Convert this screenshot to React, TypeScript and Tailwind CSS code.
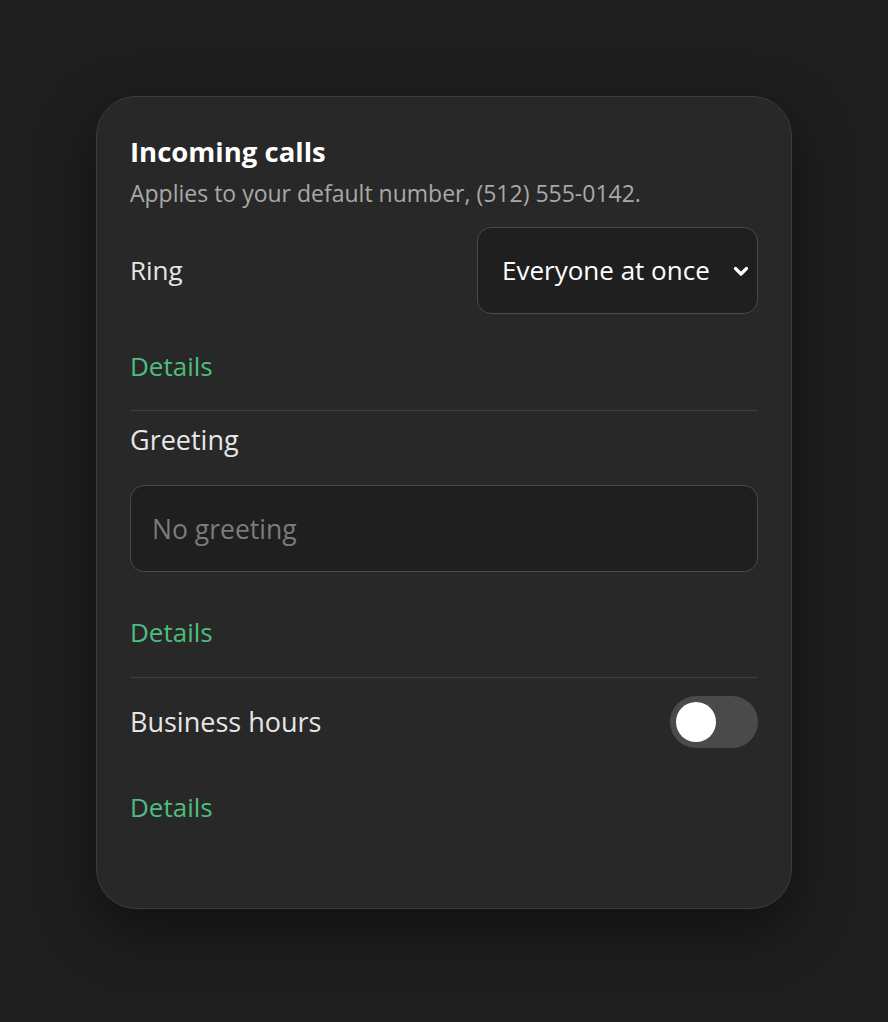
import React, { useState } from 'react';

const font = { fontFamily: '"Open Sans", "Liberation Sans", sans-serif' };

export default function App() {
  const [ring, setRing] = useState('all');
  const [hours, setHours] = useState(false);

  return (
    <div className="min-h-screen bg-[#1e1e1e] flex justify-center pt-[96px]" style={font}>
      <section className="w-[696px] h-[813px] rounded-[40px] border border-[#3d3d3d] bg-[#282828] px-[33px] pt-[39px] shadow-[0_20px_60px_rgba(0,0,0,0.45)] flex flex-col">
        <h2 className="text-[27.5px] leading-[32px] font-bold text-white">Incoming calls</h2>
        <p className="mt-[10px] text-[23px] leading-[30px] text-[#a9a9a9]">
          Applies to your default number, (512) 555-0142.
        </p>

        <div className="mt-[19px] flex items-center justify-between">
          <span className="text-[26px] text-[#e6e6e6]">Ring</span>
          <div className="relative">
            <select
              value={ring}
              onChange={(e) => setRing(e.target.value)}
              className="appearance-none w-[281px] h-[87px] rounded-[14px] border border-[#4a4a4a] bg-[#1f1f1f] pl-[24px] pr-[40px] text-[26px] text-white focus:outline-none"
            >
              <option value="all">Everyone at once</option>
              <option value="order">In order</option>
            </select>
            <svg
              className="absolute right-[7px] top-1/2 -translate-y-1/2 pointer-events-none"
              width="20"
              height="20"
              viewBox="0 0 20 20"
              fill="none"
            >
              <path d="M4.5 7.5l5.5 5.5 5.5-5.5" stroke="white" strokeWidth="3.2" strokeLinecap="round" strokeLinejoin="round" />
            </svg>
          </div>
        </div>

        <a className="mt-[37px] text-[26px] leading-[30px] text-[#4dbd7d] self-start">Details</a>
        <div className="mt-[29px] h-px bg-[#3e3e3e]" />

        <span className="mt-[14px] text-[27px] leading-[30px] text-[#e6e6e6]">Greeting</span>
        <input
          placeholder="No greeting"
          className="mt-[30px] h-[87px] rounded-[14px] border border-[#4a4a4a] bg-[#1f1f1f] px-[21px] text-[26.5px] text-white placeholder:text-[#7b7b7b] focus:outline-none"
        />

        <a className="mt-[45px] text-[26px] leading-[30px] text-[#4dbd7d] self-start">Details</a>
        <div className="mt-[30px] h-px bg-[#3e3e3e]" />

        <div className="mt-[18px] flex items-center justify-between">
          <span className="text-[27px] text-[#e6e6e6]">Business hours</span>
          <button
            onClick={() => setHours(!hours)}
            className={hours ? 'w-[88px] h-[52px] rounded-full bg-[#4dbd7d] p-[6px] flex justify-end' : 'w-[88px] h-[52px] rounded-full bg-[#4a4a4a] p-[6px] flex justify-start'}
          >
            <span className="w-[40px] h-[40px] rounded-full bg-white block" />
          </button>
        </div>

        <a className="mt-[44px] text-[26px] leading-[30px] text-[#4dbd7d] self-start">Details</a>
      </section>
    </div>
  );
}
